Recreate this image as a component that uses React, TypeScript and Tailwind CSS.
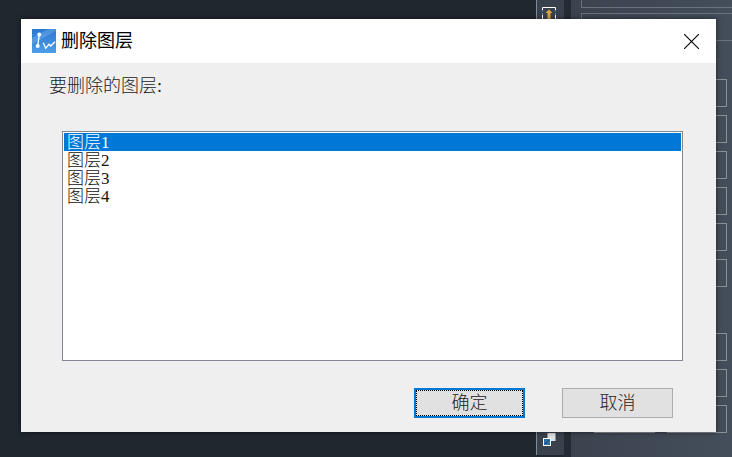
const cjkSerif = "font-['Liberation_Serif','Noto_Sans_CJK_SC',serif]";

function UploadIcon() {
  return (
    <svg width="14" height="12" viewBox="0 0 14 12" className="mt-[7px] ml-[5px]">
      <path d="M0.5 3V0.5H13.5V3M0.5 8V12M13.5 8V12" fill="none" stroke="#fff" strokeWidth="1" />
      <path d="M0.5 3v5M13.5 3v5" stroke="#4f9bd9" strokeWidth="1" strokeDasharray="1.5 1.5" />
      <path d="M7 2.5L10.5 6H8.5V12H5.5V6H3.5Z" fill="#dba543" />
    </svg>
  );
}

function LayerIcon() {
  return (
    <svg width="13" height="13" viewBox="0 0 13 13">
      <rect x="4.5" y="0" width="8" height="8" fill="#dfe1e4" />
      <rect x="0" y="5" width="8" height="8" fill="#fff" />
      <rect x="1" y="6" width="6" height="6" fill="#2b6ea6" />
      <path d="M2 11L6 7" stroke="#0d2438" strokeWidth="1" strokeDasharray="1 1" />
    </svg>
  );
}

function Logo() {
  return (
    <svg width="24" height="24" viewBox="0 0 24 24" className="shrink-0">
      <defs>
        <linearGradient id="lg" x1="0" y1="0" x2="0" y2="1">
          <stop offset="0" stopColor="#2a78d0" />
          <stop offset="1" stopColor="#4d9de8" />
        </linearGradient>
      </defs>
      <rect width="24" height="24" fill="url(#lg)" />
      <path d="M0 9L16 0H24V2L0 15Z" fill="#7fb6ee" opacity="0.4" />
      <path d="M5.7 17L7.3 5.5" stroke="#fff" strokeWidth="1.3" fill="none" />
      <path d="M11.3 13.7L13.7 19.3L17 15.3L18.7 17L23 12.7" stroke="#fff" strokeWidth="1.3" fill="none" />
      <circle cx="7.3" cy="5.5" r="2" fill="#fff" />
      <circle cx="5.7" cy="17" r="2" fill="#fff" />
    </svg>
  );
}

function BoxRow() {
  return (
    <div className="flex justify-end gap-[12px]">
      <div className="h-[28px] w-[61px] border border-[#8b9097]" />
      <div className="h-[28px] w-[60px] border border-[#8b9097]" />
    </div>
  );
}

const topBoxes = [0, 1, 2, 3, 4, 5];
const lowBoxes = [0, 1, 2];

export default function App() {
  const rows = ["图层1", "图层2", "图层3", "图层4"];
  return (
    <div className="relative flex h-[457px] w-[732px] overflow-hidden bg-[#20272f]">
      {/* workspace */}
      <div className="h-full w-[536px] shrink-0 bg-[#20272f]" />

      {/* vertical toolbar */}
      <div className="flex h-[455px] w-[28px] shrink-0 flex-col justify-between border-l border-[#7f8b98] bg-[#39414d]">
        <UploadIcon />
        <div className="mb-[9px] ml-[6px]">
          <LayerIcon />
        </div>
      </div>
      <div className="h-full w-[7px] shrink-0 bg-[#252b34]" />

      {/* right panel */}
      <div className="relative flex h-full flex-1 flex-col overflow-hidden bg-gradient-to-r from-[#3b434f] to-[#444d5a] pl-[10px]">
        <div className="h-[8px] border-b border-l border-[#6b727b]" />
        <div className="mt-[5px] h-[28px] border-y border-l border-[#6b727b]" />
        <div className="mt-[38px] flex flex-col gap-[8px] pr-[5px]">
          {topBoxes.map((b) => (
            <BoxRow key={b} />
          ))}
        </div>
        <div className="mt-[46px] flex flex-col gap-[8px] pr-[5px]">
          {lowBoxes.map((b) => (
            <BoxRow key={b} />
          ))}
        </div>
        <div className="mt-[22px] ml-[12px] h-[2px] overflow-hidden text-[12px] leading-[16px] text-white font-['Noto_Sans_CJK_SC',sans-serif]">
          特性
        </div>
      </div>

      {/* dialog */}
      <div className="absolute top-[19px] left-[21px] flex h-[413px] w-[695px] flex-col bg-[#efefef] shadow-[0_0_5px_rgba(0,0,0,0.55)]">
        <div className="flex h-[44px] shrink-0 items-center bg-white pr-[17px] pl-[11px]">
          <Logo />
          <span className="mb-[3px] ml-[5px] text-[18px] text-black font-['Noto_Sans_CJK_SC',sans-serif]">删除图层</span>
          <svg width="15" height="15" viewBox="0 0 15 15" className="ml-auto">
            <path d="M0 0L15 15M15 0L0 15" stroke="#000" strokeWidth="1.1" fill="none" />
          </svg>
        </div>
        <div className={`flex flex-1 flex-col pt-[13px] pr-[33px] pl-[28px] ${cjkSerif}`}>
          <div className="h-[20px] text-[18px] leading-[20px] font-light text-[#222]">要删除的图层:</div>
          <div className="mt-[35px] ml-[13px] h-[230px] border border-[#828790] bg-white p-px">
            {rows.map((r, i) => (
              <div
                key={r}
                className={`h-[18px] pl-[3px] text-[17px] leading-[20px] font-light ${i === 0 ? "bg-[#0078d7] text-white" : "text-[#111]"}`}
              >
                {r}
              </div>
            ))}
          </div>
          <div className="mt-[27px] flex justify-end gap-[37px] pr-[10px]">
            <button className="h-[30px] w-[111px] border-2 border-[#0078d7] bg-[#e1e1e1] p-0">
              <span className="flex h-full w-full items-center justify-center border border-dotted border-black text-[18px] font-light text-[#222]">
                确定
              </span>
            </button>
            <button className="h-[30px] w-[111px] border border-[#adadad] bg-[#e1e1e1] text-[18px] font-light text-[#222]">
              取消
            </button>
          </div>
        </div>
      </div>
    </div>
  );
}
